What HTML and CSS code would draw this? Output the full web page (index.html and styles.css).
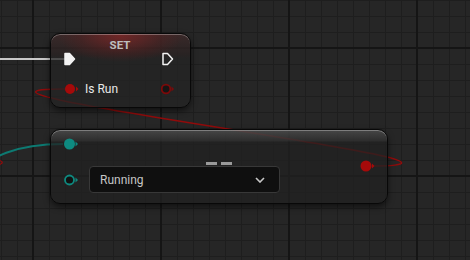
FILE: index.html
```html
<!DOCTYPE html><html><head><meta charset="utf-8">
<title>Blueprint graph</title>
<link rel="stylesheet" href="styles.css">
</head><body>

<div class="graph">
<svg class="wires" width="470" height="260" viewBox="0 0 470 260">
<path class="wire-exec" d="M-10,59 H65"/>
<path class="wire-teal" d="M-120,200 C-20,200 -37,144 63,144"/>
<path class="wire-red" d="M-12,158 C7,161 7,164 -12,167"/>
<path class="wire-red" d="M371,166 C548,166 -108,89 65,89"/>
</svg>

<div class="node node-set">
	<div class="node-title">SET</div>
	<div class="row">
		<svg class="pin" width="16" height="14" viewBox="0 0 16 14"><path class="exec-fill" d="M2,1.5 H6.5 L11.5,7 L6.5,12.5 H2 Z"/></svg>
		<svg class="pin pin-out" width="16" height="14" viewBox="0 0 16 14"><path class="exec-line" d="M2,1.5 H6.5 L11.5,7 L6.5,12.5 H2 Z"/></svg>
	</div>
	<div class="row row-data">
		<svg class="pin" width="16" height="12" viewBox="0 0 16 12"><circle class="red-fill" cx="7" cy="6" r="5"/><path class="red-tip" d="M13,3.5 L15.5,6 L13,8.5 Z"/></svg>
		<span class="pin-label">Is Run</span>
		<svg class="pin pin-out" width="16" height="12" viewBox="0 0 16 12"><circle class="red-ring" cx="5" cy="6" r="4.3"/><path class="red-tip dim" d="M10.5,3.5 L13,6 L10.5,8.5 Z"/></svg>
	</div>
</div>

<div class="node node-eq">
	<div class="eq-title"><span></span><span></span></div>
	<div class="inputs">
		<svg class="pin" width="16" height="12" viewBox="0 0 16 12"><circle class="teal-fill" cx="6.5" cy="6" r="5.5"/><path class="teal-tip" d="M12.5,3.5 L15,6 L12.5,8.5 Z"/></svg>
		<div class="row-enum">
			<svg class="pin" width="16" height="12" viewBox="0 0 16 12"><circle class="teal-ring" cx="6.5" cy="6" r="4.5"/><path class="teal-tip" d="M12.5,3.5 L15,6 L12.5,8.5 Z"/></svg>
			<div class="combo">
				<span>Running</span>
				<svg width="10" height="6" viewBox="0 0 10 6"><path class="chevron" d="M1,1 L5,5 L9,1"/></svg>
			</div>
		</div>
	</div>
	<div class="outputs">
		<svg class="pin" width="16" height="12" viewBox="0 0 16 12"><circle class="red-fill" cx="6" cy="6" r="5.5"/><path class="red-tip" d="M12,3.5 L14.5,6 L12,8.5 Z"/></svg>
	</div>
</div>
</div>

</body></html>
```

FILE: styles.css
```css
body {
	margin: 0;
	font-family: Roboto, "Liberation Sans", sans-serif;
}
.graph {
	position: relative;
	width: 470px;
	height: 260px;
	overflow: hidden;
	background-color: #262626;
	background-image:
		linear-gradient(to right, #151515 2px, transparent 2px),
		linear-gradient(to bottom, #151515 2px, transparent 2px),
		linear-gradient(to right, #1e1e1e 1px, transparent 1px),
		linear-gradient(to bottom, #1e1e1e 1px, transparent 1px);
	background-size: 128px 100%, 100% 128px, 16px 100%, 100% 16px;
	background-position: 32px 0, 0 47px, 1px 0, 0 0;
}
.wires {
	position: absolute;
	left: 0;
	top: 0;
	fill: none;
}
.wire-exec {
	stroke: #c8c8c8;
	stroke-width: 2;
}
.wire-teal {
	stroke: #0d7a72;
	stroke-width: 2;
}
.wire-red {
	stroke: #900b0b;
	stroke-width: 1.5;
}

.node {
	position: absolute;
	box-sizing: border-box;
	border: 1px solid #080808;
	border-radius: 10px;
	background: rgba(36, 36, 36, .75);
	box-shadow: 0 3px 6px rgba(0, 0, 0, .55), inset 0 1px 0 rgba(255, 255, 255, .3);
}
.node-set {
	left: 50px;
	top: 33px;
	width: 141px;
	height: 75px;
	padding: 0 13px 0 12px;
	background:
		radial-gradient(ellipse 45% 26px at 50% 2px, rgba(135, 38, 38, .7), rgba(100, 30, 30, .3) 65%, transparent),
		linear-gradient(to bottom, rgba(75, 45, 45, .55), rgba(55, 32, 32, .25) 20px, transparent 25px),
		rgba(36, 36, 36, .76);
}
.node-title {
	height: 18px;
	padding-top: 4px;
	box-sizing: border-box;
	text-align: center;
	font-size: 11.5px;
	font-weight: bold;
	line-height: 14px;
	color: #bdbdbd;
}
.row {
	display: flex;
	align-items: center;
	height: 14px;
}
.row-data {
	margin-top: 16px;
}
.pin {
	display: block;
	flex: none;
}
.pin-out {
	margin-left: auto;
}
.pin-label {
	margin-left: 6px;
	font-size: 12px;
	color: #e8e8e8;
}
.exec-fill {
	fill: #f2f2f2;
	stroke: #f2f2f2;
	stroke-width: 1.5;
	stroke-linejoin: round;
}
.exec-line {
	fill: none;
	stroke: #f2f2f2;
	stroke-width: 1.5;
	stroke-linejoin: round;
}
.red-fill {
	fill: #a50a0a;
}
.red-tip {
	fill: #a50a0a;
}
.red-tip.dim {
	fill: #7c0909;
}
.red-ring {
	fill: #151515;
	stroke: #7c0909;
	stroke-width: 1.8;
}
.teal-fill {
	fill: #0e8a80;
}
.teal-tip {
	fill: #0e8a80;
}
.teal-ring {
	fill: #121212;
	stroke: #0e8a80;
	stroke-width: 1.8;
}

.node-eq {
	left: 50px;
	top: 129px;
	width: 338px;
	height: 75px;
	display: flex;
	padding: 8px 11px 0 12px;
	background:
		linear-gradient(to bottom, rgba(100, 100, 100, .55), rgba(58, 58, 58, .45) 11px, transparent 12px),
		rgba(34, 34, 34, .74);
}
.eq-title {
	position: absolute;
	left: 155px;
	top: 32px;
	display: flex;
	gap: 4px;
}
.eq-title span {
	width: 11px;
	height: 3px;
	background: #9a9a9a;
}
.inputs {
	display: flex;
	flex-direction: column;
	gap: 16px;
}
.row-enum {
	display: flex;
	align-items: center;
	gap: 10px;
}
.combo {
	display: flex;
	align-items: center;
	box-sizing: border-box;
	width: 191px;
	height: 27px;
	padding: 0 14px 0 10px;
	border: 1px solid #383838;
	border-radius: 4px;
	background: #0f0f0f;
	font-size: 12px;
	color: #c6c6c6;
}
.combo svg {
	margin-left: auto;
}
.chevron {
	fill: none;
	stroke: #c8c8c8;
	stroke-width: 1.6;
}
.outputs {
	margin-left: auto;
	padding-top: 22px;
}
```
